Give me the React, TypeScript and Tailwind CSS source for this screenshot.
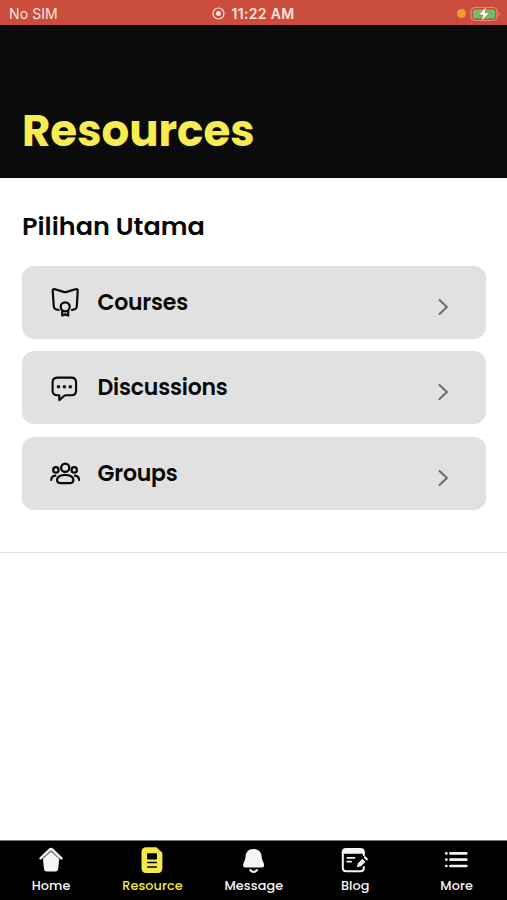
import type { ReactNode } from 'react';

const CoursesIcon = () => (
  <svg width="32" height="32" viewBox="0 0 32 32" fill="none" stroke="currentColor" strokeWidth="2.2" strokeLinecap="round" strokeLinejoin="round">
    <path d="M9.6 24L6.9 23.3Q5 22.7 4.8 20.5L3.7 5.2Q3.5 2.6 6 3.2L14.6 5.9Q16.2 6.4 17.8 5.9L26.4 3.2Q28.9 2.6 28.7 5.2L27.8 20.5Q27.6 22.7 25.7 23.3L23 24" />
    <circle cx="16.2" cy="20.8" r="4.5" />
    <path d="M13.2 25V29.5L16.2 28.4L19.2 29.5V25" />
  </svg>
);

const DiscussionsIcon = () => (
  <svg width="32" height="32" viewBox="0 0 32 32" fill="none" stroke="currentColor" strokeWidth="2.1" strokeLinecap="round" strokeLinejoin="round">
    <path d="M8.3 5.6H22.2Q27.1 5.6 27.1 10.5V18.5Q27.1 23.3 22.2 23.3H17Q15.9 23.3 15 24L10.3 28.1V23.3H8.3Q3.6 23.3 3.6 18.5V10.5Q3.6 5.6 8.3 5.6Z" />
    <g fill="currentColor" stroke="none">
      <circle cx="9.5" cy="14.8" r="1.8" />
      <circle cx="15.4" cy="14.8" r="1.8" />
      <circle cx="21.3" cy="14.8" r="1.8" />
    </g>
  </svg>
);

const GroupsIcon = () => (
  <svg width="32" height="32" viewBox="0 0 32 32" fill="none" stroke="currentColor" strokeWidth="2.2" strokeLinecap="round">
    <circle cx="16.2" cy="10.8" r="4.1" />
    <circle cx="6.9" cy="12.9" r="2.7" />
    <circle cx="25.2" cy="12.9" r="2.7" />
    <path d="M16.2 17.9C20.8 17.9 24.4 20 24.4 22.8C24.4 25.2 22.6 26.2 20.3 26.2H12.1C9.8 26.2 8 25.2 8 22.8C8 20 11.6 17.9 16.2 17.9Z" />
    <path d="M2.2 23Q2.3 19.2 6.4 18.7M30.1 23Q30 19.2 25.9 18.7" />
  </svg>
);

const HomeIcon = () => (
  <svg width="28" height="28" viewBox="0 0 28 28" fill="none">
    <path d="M14 5L22.3 12.2L21.2 23Q20.9 25.6 18.4 25.6H9.8Q7.3 25.6 7 23L5.9 12.2Z" fill="currentColor" />
    <path d="M3.6 12.4L12.6 3.8Q14 2.6 15.4 3.8L24.4 12.4" stroke="currentColor" strokeWidth="2.6" strokeLinecap="round" />
    <path d="M4.8 13.7L14 5.5L23.2 13.7" stroke="black" strokeWidth="0.4" />
  </svg>
);

const ResourceIcon = () => (
  <svg width="28" height="28" viewBox="0 0 28 28" fill="none">
    <path d="M8.2 1.2H18.4L24.4 6.8V22.2Q24.4 27 19.6 27H8.2Q3.5 27 3.5 22.2V6Q3.5 1.2 8.2 1.2Z" fill="currentColor" />
    <rect x="9" y="7.2" width="10" height="6.2" rx="1" fill="black" />
    <path d="M9.8 16.5H18.4M9.8 20.9H18.4" stroke="black" strokeWidth="1.5" strokeLinecap="round" />
  </svg>
);

const MessageIcon = () => (
  <svg width="28" height="28" viewBox="0 0 28 28" fill="none">
    <path d="M13.6 3C18.9 3 21.6 6.5 21.7 11C21.8 14.6 24.2 16.8 24.2 19.2Q24.2 21.5 21.7 21.5H5.5Q3 21.5 3 19.2C3 16.8 5.4 14.6 5.5 11C5.6 6.5 8.3 3 13.6 3Z" fill="currentColor" />
    <path d="M10.2 24Q13.6 28 17 24" stroke="currentColor" strokeWidth="2" strokeLinecap="round" />
  </svg>
);

const BlogIcon = () => (
  <svg width="28" height="28" viewBox="0 0 28 28" fill="none" stroke="currentColor" strokeWidth="2" strokeLinecap="round">
    <path d="M1.8 6.5V22Q1.8 25.2 5.2 25.2H19.6Q22.8 25.2 22.8 22V21" />
    <path d="M1.8 6.7V5.8Q1.8 2.9 5.2 2.9H19.4Q22.8 2.9 22.8 5.8V6.7Z" fill="currentColor" />
    <path d="M22.8 7V9.2" />
    <path d="M6.3 11.8H13.4M6.3 15.7H10" strokeWidth="1.8" />
    <path d="M16.6 20.5L17.4 17.6L21.4 13.6L23.6 15.8L19.5 19.8Z" fill="currentColor" strokeWidth="1.2" strokeLinejoin="round" />
    <path d="M24 11.4L25.8 13.2" strokeWidth="2.2" />
  </svg>
);

const MoreIcon = () => (
  <svg width="28" height="28" viewBox="0 0 28 28" fill="none" stroke="currentColor" strokeWidth="2.7" strokeLinecap="round">
    <path d="M7.4 7.4H23.3M7.4 13.7H23.3M7.4 20H23.3" />
    <path d="M3.3 7.4H3.4M3.3 13.7H3.4M3.3 20H3.4" />
  </svg>
);

const resources = [
  { label: 'Courses', icon: <CoursesIcon /> },
  { label: 'Discussions', icon: <DiscussionsIcon /> },
  { label: 'Groups', icon: <GroupsIcon /> },
];

const tabs = [
  { label: 'Home', icon: <HomeIcon /> },
  { label: 'Resource', icon: <ResourceIcon />, active: true },
  { label: 'Message', icon: <MessageIcon /> },
  { label: 'Blog', icon: <BlogIcon /> },
  { label: 'More', icon: <MoreIcon /> },
];

function StatusBar() {
  return (
    <div className="grid h-[25px] grid-cols-3 items-center bg-[#cb4d3d] px-[9px] pt-[3px] font-['Inter',sans-serif] text-[14px] leading-none text-[#ffe4dc]">
      <span className="tracking-[0.1px]">No SIM</span>
      <div className="flex items-center justify-center gap-[6px] font-semibold">
        <svg className="-mt-px" width="13" height="13" viewBox="0 0 13 13" fill="none">
          <circle cx="6.5" cy="6.5" r="5.5" stroke="currentColor" strokeWidth="1.2" />
          <circle cx="6.5" cy="6.5" r="2.5" fill="currentColor" />
        </svg>
        <span className="whitespace-nowrap tracking-[0.35px]">11:22 AM</span>
      </div>
      <div className="-mr-[3px] -mt-px flex items-center justify-end gap-[4px]">
        <span className="h-[9px] w-[9px] rounded-full bg-[#f29a38]" />
        <svg width="31" height="16" viewBox="0 0 31 16" fill="none">
          <rect x="1" y="1.5" width="26" height="13" rx="4" stroke="#df8d7c" strokeWidth="1.2" />
          <rect x="3" y="3.5" width="22" height="9" rx="2" fill="#65c466" />
          <path d="M28.7 5.8Q30.8 8 28.7 10.2Z" fill="#df8d7c" />
          <path d="M16.5 0.5L8.5 9H13L11.3 15.5L19.5 6.8H15Z" fill="white" stroke="#cb4d3d" strokeWidth="0.6" />
        </svg>
      </div>
    </div>
  );
}

function ResourceCard({ label, icon }: { label: string; icon: ReactNode }) {
  return (
    <button className="flex h-[73px] w-full items-center rounded-[12px] bg-[#e1e1e1] pl-[27px] pr-[36px] text-left text-[#090909]">
      {icon}
      <span className="ml-[16.5px] flex-1 pt-[0.5px] text-[22px] font-semibold tracking-[-0.2px]">{label}</span>
      <svg className="mt-[9px]" width="14" height="20" viewBox="0 0 14 20" fill="none" stroke="#6e6e6e" strokeWidth="2.1" strokeLinecap="round" strokeLinejoin="round">
        <path d="M3.5 3L10.9 10L3.5 17" />
      </svg>
    </button>
  );
}

function TabBar() {
  return (
    <nav className="grid h-[60px] grid-cols-5 border-t border-[#777] bg-black">
      {tabs.map((tab) => (
        <div key={tab.label} className={`flex flex-col items-center pl-[0.8px] pt-[5px] ${tab.active ? 'text-[#f5e84a]' : 'text-[#f5f5f5]'}`}>
          {tab.icon}
          <span className="mt-[3px] text-[12.8px] font-medium leading-[18px] tracking-[0.1px]">{tab.label}</span>
        </div>
      ))}
    </nav>
  );
}

export default function App() {
  return (
    <div className="flex h-screen w-full flex-col overflow-hidden bg-white font-['Poppins','Inter',sans-serif]">
      <StatusBar />
      <header className="flex h-[153px] items-end bg-[#0b0b0b] px-[22px] pb-[22px]">
        <h1 className="text-[43.5px] font-bold leading-[50px] text-[#f8ec52]">Resources</h1>
      </header>
      <main className="flex-1">
        <section className="h-[375px] border-b border-[#e2e2e2] pl-[22px] pr-[21px] pt-[32px]">
          <h2 className="text-[25.5px] font-semibold leading-[32px] text-[#090909]">Pilihan Utama</h2>
          <div className="mt-[23.5px] flex flex-col gap-[12.5px]">
            {resources.map((item) => (
              <ResourceCard key={item.label} {...item} />
            ))}
          </div>
        </section>
      </main>
      <TabBar />
    </div>
  );
}
